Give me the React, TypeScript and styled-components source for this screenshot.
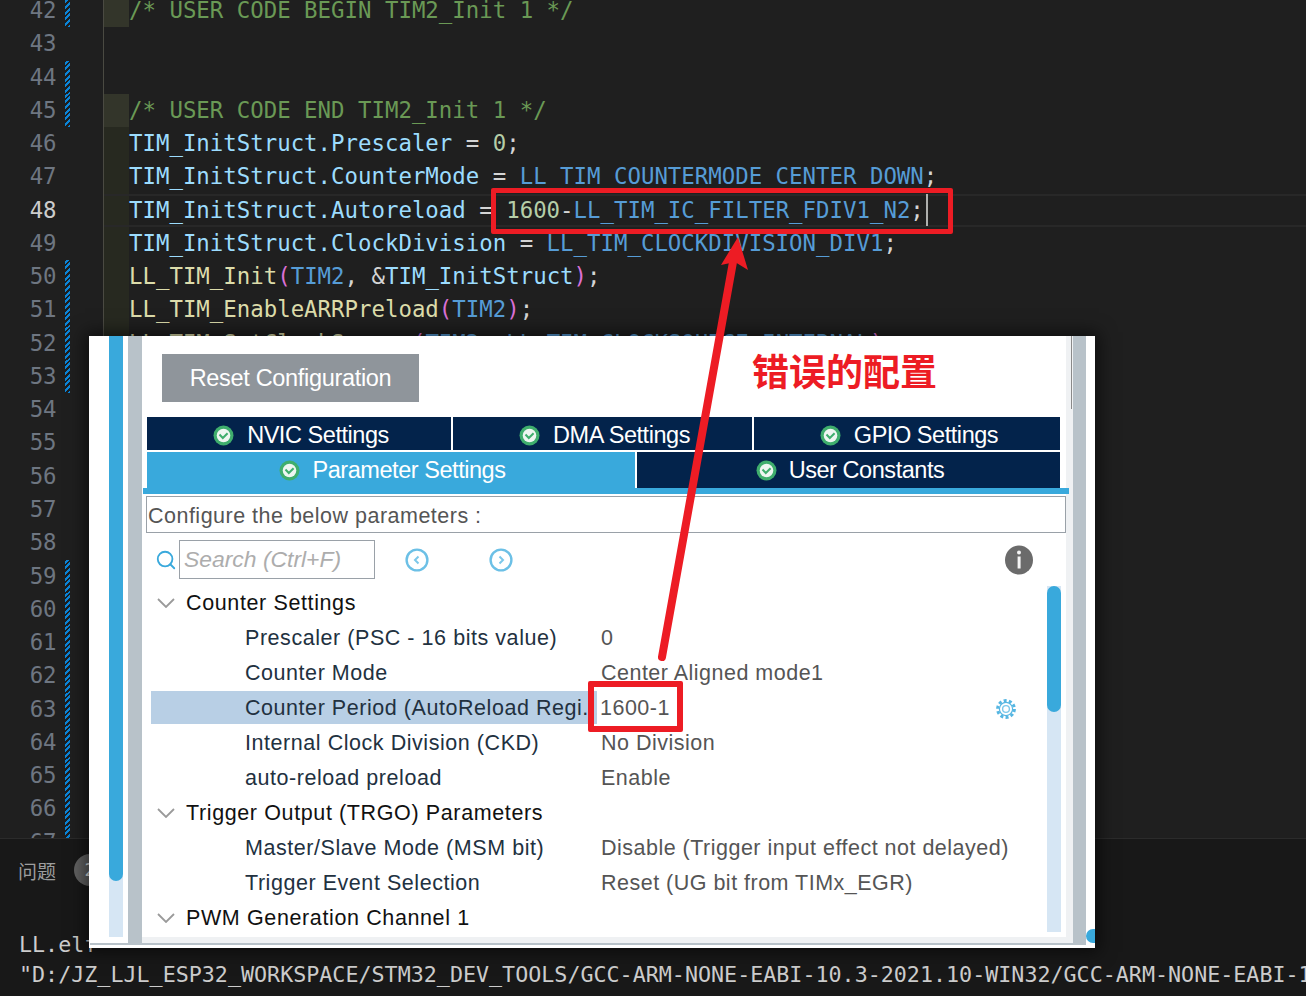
import styled, { createGlobalStyle } from "styled-components";
import { Search } from "lucide-react";

const GlobalStyle = createGlobalStyle`
  html, body {
    margin: 0;
    padding: 0;
    background: #1f1f1f;
  }
  #root {
    width: 1306px;
    height: 996px;
  }
`;

const tokenColors: Record<string, string> = {
  comment: "#6a9955",
  variable: "#9cdcfe",
  macro: "#569cd6",
  func: "#dcdcaa",
  number: "#b5cea8",
  plain: "#d4d4d4",
  paren: "#da70d6",
};

type CodeToken = [string, string];

const codeLines: Record<number, CodeToken[]> = {
  42: [["comment", "/* USER CODE BEGIN TIM2_Init 1 */"]],
  45: [["comment", "/* USER CODE END TIM2_Init 1 */"]],
  46: [["variable", "TIM_InitStruct.Prescaler"], ["plain", " = "], ["number", "0"], ["plain", ";"]],
  47: [["variable", "TIM_InitStruct.CounterMode"], ["plain", " = "], ["macro", "LL_TIM_COUNTERMODE_CENTER_DOWN"], ["plain", ";"]],
  48: [["variable", "TIM_InitStruct.Autoreload"], ["plain", " = "], ["number", "1600"], ["plain", "-"], ["macro", "LL_TIM_IC_FILTER_FDIV1_N2"], ["plain", ";"]],
  49: [["variable", "TIM_InitStruct.ClockDivision"], ["plain", " = "], ["macro", "LL_TIM_CLOCKDIVISION_DIV1"], ["plain", ";"]],
  50: [["func", "LL_TIM_Init"], ["paren", "("], ["macro", "TIM2"], ["plain", ", &"], ["variable", "TIM_InitStruct"], ["paren", ")"], ["plain", ";"]],
  51: [["func", "LL_TIM_EnableARRPreload"], ["paren", "("], ["macro", "TIM2"], ["paren", ")"], ["plain", ";"]],
  52: [["func", "LL_TIM_SetClockSource"], ["paren", "("], ["macro", "TIM2"], ["plain", ", "], ["macro", "LL_TIM_CLOCKSOURCE_INTERNAL"], ["paren", ")"], ["plain", ";"]],
};

const lineNumbers = Array.from({ length: 26 }, (_, i) => 42 + i);
const changedLines = [42, 44, 45, 50, 51, 52, 53, 59, 60, 61, 62, 63, 64, 65, 66, 67];
const bandLines = [42, 45, 46, 47, 48, 49, 50, 51, 52];

const treeRows = [
  { section: "Counter Settings" },
  { label: "Prescaler (PSC - 16 bits value)", value: "0" },
  { label: "Counter Mode", value: "Center Aligned mode1" },
  { label: "Counter Period (AutoReload Regi...", value: "1600-1", active: true },
  { label: "Internal Clock Division (CKD)", value: "No Division" },
  { label: "auto-reload preload", value: "Enable" },
  { section: "Trigger Output (TRGO) Parameters" },
  { label: "Master/Slave Mode (MSM bit)", value: "Disable (Trigger input effect not delayed)" },
  { label: "Trigger Event Selection", value: "Reset (UG bit from TIMx_EGR)" },
  { section: "PWM Generation Channel 1" },
];

function CheckBadge() {
  return (
    <svg width="21" height="21" viewBox="0 0 21 21">
      <circle cx="10.5" cy="10.5" r="10" fill="#3fae6d" />
      <circle cx="10.5" cy="10.5" r="6.8" fill="#eef6f1" />
      <path d="M6.5 9.5 L9.8 13 L14.6 8.2" fill="none" stroke="#3fae6d" strokeWidth="2" />
    </svg>
  );
}

function NavIcon({ right }: { right?: boolean }) {
  return (
    <svg width="24" height="24" viewBox="0 0 24 24">
      <circle cx="12" cy="12" r="10.4" fill="none" stroke="#6cc0e6" strokeWidth="2.4" />
      <path
        d={right ? "M10.5 8.5 L14 12 L10.5 15.5" : "M13.5 8.5 L10 12 L13.5 15.5"}
        fill="none"
        stroke="#7cc8ea"
        strokeWidth="2"
      />
    </svg>
  );
}

function InfoIcon() {
  return (
    <svg width="28" height="30" viewBox="0 0 28 30">
      <ellipse cx="14" cy="15" rx="14" ry="14.5" fill="#6b6b6b" />
      <rect x="12.6" y="11.5" width="3" height="12" fill="#f4f4f4" />
      <circle cx="14" cy="7.6" r="2" fill="#f4f4f4" />
    </svg>
  );
}

function Chevron() {
  return (
    <svg width="18" height="10" viewBox="0 0 18 10">
      <path d="M1 1 L9 9 L17 1" fill="none" stroke="#9a9a9a" strokeWidth="1.8" />
    </svg>
  );
}

function GearIcon() {
  return (
    <svg width="20" height="20" viewBox="0 0 20 20" fill="none">
      <circle cx="10" cy="10" r="8.4" stroke="#55b6e2" strokeWidth="3" strokeDasharray="3 2.28" />
      <circle cx="10" cy="10" r="6.6" stroke="#55b6e2" strokeWidth="1.2" />
      <circle cx="10" cy="10" r="3.4" stroke="#7cc8ea" strokeWidth="1.4" />
    </svg>
  );
}

export default function App() {
  return (
    <Page>
      <GlobalStyle />
      <Editor>
        <Lines>
          {lineNumbers.map((n) => (
            <Line key={n}>
              <LineNo $current={n === 48}>{n}</LineNo>
              <GitMark $on={changedLines.includes(n)} />
              <Guide
                $current={n === 48}
                $band={n === 42 || n === 45 ? "strong" : bandLines.includes(n) ? "soft" : "none"}
              />
              <Code $current={n === 48}>
                {(codeLines[n] || []).map(([kind, text], i) => (
                  <Token key={i} $kind={kind}>
                    {text}
                  </Token>
                ))}
                {n === 48 && <Caret />}
              </Code>
            </Line>
          ))}
        </Lines>
      </Editor>
      <Panel>
        <PanelTabs>
          <PanelTab>问题</PanelTab>
          <CountBadge>2</CountBadge>
        </PanelTabs>
        <Terminal>
          <div>LL.elf</div>
          <div>"D:/JZ_LJL_ESP32_WORKSPACE/STM32_DEV_TOOLS/GCC-ARM-NONE-EABI-10.3-2021.10-WIN32/GCC-ARM-NONE-EABI-10.3-2021.10</div>
        </Terminal>
      </Panel>

      <Dialog>
        <DialogMain>
          <SideTrack>
            <SideThumb />
          </SideTrack>
          <GrayBar />
          <Content>
            <ResetButton>Reset Configuration</ResetButton>
            <TabRow $top>
              <Tab $width={304}><CheckBadge />NVIC Settings</Tab>
              <Tab $width={299}><CheckBadge />DMA Settings</Tab>
              <Tab $width={306}><CheckBadge />GPIO Settings</Tab>
            </TabRow>
            <TabRow>
              <Tab $width={488} $active $tall><CheckBadge />Parameter Settings</Tab>
              <Tab $width={423} $tall><CheckBadge />User Constants</Tab>
            </TabRow>
            <TabLine />
            <ConfigBox>Configure the below parameters :</ConfigBox>
            <SearchRow>
              <Search size={22} color="#39a9dc" strokeWidth={2} />
              <SearchInput>Search (Ctrl+F)</SearchInput>
              <NavButton $gap={30}><NavIcon /></NavButton>
              <NavButton $gap={60}><NavIcon right /></NavButton>
              <InfoSlot><InfoIcon /></InfoSlot>
            </SearchRow>
            <TreeArea>
              <Tree>
                {treeRows.map((row, i) =>
                  row.section ? (
                    <SectionRow key={i}>
                      <Chevron />
                      <SectionName>{row.section}</SectionName>
                    </SectionRow>
                  ) : (
                    <ParamRow key={i}>
                      <ParamName $active={row.active}>{row.label}</ParamName>
                      <ParamValue $active={row.active}>
                        {row.value}
                        {row.active && (
                          <GearSlot>
                            <GearIcon />
                          </GearSlot>
                        )}
                      </ParamValue>
                    </ParamRow>
                  )
                )}
              </Tree>
              <TreeTrack>
                <TreeThumb />
              </TreeTrack>
            </TreeArea>
          </Content>
          <GrayBar $narrow />
          <RightEdge />
        </DialogMain>
        <BottomBar />
        <CornerBlob />
        <TopTick />
      </Dialog>

      <Callout $left={491} $top={188} $width={462} $height={46} $border={5} />
      <Callout $left={588} $top={681} $width={95} $height={51} $border={6} />
      <ArrowLayer width="1306" height="996" viewBox="0 0 1306 996">
        <path d="M662 657 L733 262" stroke="#ed1c24" strokeWidth="8" strokeLinecap="round" fill="none" />
        <path d="M738 237 L721 265 L735 262 L748 270 Z" fill="#ed1c24" />
      </ArrowLayer>
      <CalloutText>错误的配置</CalloutText>
    </Page>
  );
}

const Page = styled.div`
  position: relative;
  width: 1306px;
  height: 996px;
  overflow: hidden;
  display: flex;
  flex-direction: column;
  background: #1f1f1f;
`;

const Editor = styled.div`
  height: 839px;
  overflow: hidden;
  flex: none;
  border-bottom: 1px solid #2b2b2b;
  box-sizing: border-box;
`;

const Lines = styled.div`
  margin-top: -6px;
`;

const Line = styled.div`
  display: flex;
  height: 33.27px;
  font-family: "DejaVu Sans Mono", "Liberation Mono", monospace;
  font-size: 22.38px;
  line-height: 33.27px;
  white-space: pre;
`;

const LineNo = styled.div<{ $current?: boolean }>`
  width: 56px;
  text-align: right;
  color: ${(p) => (p.$current ? "#cccccc" : "#6e7681")};
  flex: none;
  letter-spacing: -0.4px;
`;

const GitMark = styled.div<{ $on?: boolean }>`
  width: 5px;
  margin-left: 9px;
  flex: none;
  background: ${(p) =>
    p.$on
      ? "repeating-linear-gradient(-45deg, #0a84d8 0 2px, transparent 2px 4px)"
      : "transparent"};
`;

const currentLineEdge = "inset 0 2px 0 #282828, inset 0 -2px 0 #282828";

const Guide = styled.div<{ $band: string; $current?: boolean }>`
  width: 25px;
  margin-left: 33px;
  flex: none;
  border-left: 1px solid #4a4a42;
  background: ${(p) =>
    p.$band === "strong" ? "#33352a" : p.$band === "soft" ? "#272920" : "transparent"};
  box-shadow: ${(p) => (p.$current ? currentLineEdge : "none")};
`;

const Code = styled.div<{ $current?: boolean }>`
  flex: 1;
  display: flex;
  align-items: stretch;
  box-shadow: ${(p) => (p.$current ? currentLineEdge : "none")};
`;

const Token = styled.span<{ $kind: string }>`
  color: ${(p) => tokenColors[p.$kind]};
`;

const Caret = styled.span`
  width: 2px;
  height: 32px;
  margin-left: 2px;
  background: #aeafad;
`;

const Panel = styled.div`
  flex: 1;
  background: #181818;
  font-family: "DejaVu Sans Mono", "Liberation Mono", monospace;
`;

const PanelTabs = styled.div`
  display: flex;
  align-items: center;
  gap: 18px;
  height: 62px;
  padding-left: 18px;
`;

const PanelTab = styled.div`
  font-family: "Noto Sans CJK SC", sans-serif;
  font-size: 19px;
  color: #9d9d9d;
`;

const CountBadge = styled.div`
  width: 32px;
  height: 32px;
  border-radius: 50%;
  background: #616161;
  color: #e0e0e0;
  font-size: 18px;
  line-height: 32px;
  text-align: center;
`;

const Terminal = styled.div`
  margin-top: 29px;
  padding-left: 19px;
  font-size: 21.7px;
  line-height: 30px;
  color: #cccccc;
  white-space: nowrap;
`;

const Dialog = styled.div`
  position: absolute;
  left: 89px;
  top: 336px;
  width: 1006px;
  height: 612px;
  background: #ffffff;
  box-shadow: 0 0 16px 4px rgba(0, 0, 0, 0.55);
  font-family: "Liberation Sans", Arial, sans-serif;
`;

const DialogMain = styled.div`
  display: flex;
  height: 607px;
  padding-left: 20px;
  box-sizing: border-box;
`;

const SideTrack = styled.div`
  width: 14px;
  height: 601px;
  flex: none;
  margin-right: 5px;
  background: #d6e6f4;
`;

const SideThumb = styled.div`
  height: 545px;
  background: #39a9dc;
  border-radius: 0 0 7px 7px;
`;

const GrayBar = styled.div<{ $narrow?: boolean }>`
  width: ${(p) => (p.$narrow ? 13 : 14)}px;
  flex: none;
  background: #b8c2c9;
`;

const RightEdge = styled.div`
  width: 9px;
  flex: none;
`;

const Content = styled.div`
  width: 931px;
  flex: none;
  box-sizing: border-box;
  background: #ffffff;
  border-right: 7px solid #eff1f3;
  border-bottom: 6px solid #eff1f3;
  display: flex;
  flex-direction: column;
`;

const ResetButton = styled.div`
  width: 257px;
  height: 48px;
  margin: 18px 0 0 20px;
  background: #8f959b;
  color: #ffffff;
  font-size: 23.5px;
  letter-spacing: -0.32px;
  line-height: 48px;
  text-align: center;
  flex: none;
`;

const TabRow = styled.div<{ $top?: boolean }>`
  display: flex;
  gap: 2px;
  margin: ${(p) => (p.$top ? "15px 0 0 5px" : "2px 0 0 5px")};
  flex: none;
`;

const Tab = styled.div<{ $width: number; $active?: boolean; $tall?: boolean }>`
  width: ${(p) => p.$width}px;
  height: ${(p) => (p.$tall ? 36 : 33)}px;
  box-sizing: border-box;
  padding: ${(p) => (p.$tall ? "1px 0 0 3px" : "3px 0 0 4px")};
  background: ${(p) => (p.$active ? "#39a9dc" : "#03234b")};
  color: #ffffff;
  font-size: 23.5px;
  letter-spacing: -0.45px;
  display: flex;
  align-items: center;
  justify-content: center;
  gap: ${(p) => (p.$tall ? 12 : 13)}px;
`;

const TabLine = styled.div`
  height: 6px;
  margin: 0 -3px 0 1px;
  background: #39a9dc;
  flex: none;
`;

const ConfigBox = styled.div`
  height: 37px;
  margin: 2px 0 0 4px;
  box-sizing: border-box;
  border: 1px solid #9aa1a8;
  padding-left: 1px;
  color: #555555;
  font-size: 21.5px;
  line-height: 38px;
  letter-spacing: 0.49px;
  flex: none;
`;

const SearchRow = styled.div`
  display: flex;
  align-items: center;
  height: 39px;
  margin-top: 7px;
  padding-left: 13px;
  flex: none;
`;

const SearchInput = styled.div`
  width: 196px;
  height: 39px;
  margin-left: 2px;
  box-sizing: border-box;
  border: 1px solid #9aa1a8;
  padding-left: 4px;
  color: #adadad;
  font-style: italic;
  font-size: 22.9px;
  line-height: 37px;
`;

const NavButton = styled.div<{ $gap: number }>`
  display: flex;
  margin-left: ${(p) => p.$gap}px;
`;

const InfoSlot = styled.div`
  display: flex;
  margin-left: auto;
  margin-right: 33px;
`;

const TreeArea = styled.div`
  display: flex;
  flex: 1;
  min-height: 0;
  margin-top: 6px;
`;

const Tree = styled.div`
  flex: 1;
  min-width: 0;
  padding-left: 9px;
  overflow: hidden;
`;

const TreeTrack = styled.div`
  width: 14px;
  height: 346px;
  margin: 1px 5px 0 0;
  flex: none;
  background: #d6e6f4;
`;

const TreeThumb = styled.div`
  height: 126px;
  background: #39a9dc;
  border-radius: 7px;
`;

const SectionRow = styled.div`
  display: flex;
  align-items: center;
  height: 35px;
  padding-left: 6px;
`;

const SectionName = styled.div`
  margin-left: 11px;
  padding-top: 2px;
  color: #111111;
  font-size: 21.5px;
  letter-spacing: 0.62px;
`;

const ParamRow = styled.div`
  display: flex;
  align-items: center;
  height: 35px;
`;

const ParamName = styled.div<{ $active?: boolean }>`
  width: 446px;
  height: 33px;
  flex: none;
  box-sizing: border-box;
  padding-left: 94px;
  background: ${(p) => (p.$active ? "#b8cfe5" : "transparent")};
  color: #22313f;
  font-size: 21.5px;
  line-height: 35px;
  letter-spacing: 0.55px;
  white-space: nowrap;
  overflow: hidden;
`;

const ParamValue = styled.div<{ $active?: boolean }>`
  flex: 1;
  display: flex;
  align-items: center;
  padding-top: 2px;
  padding-left: ${(p) => (p.$active ? 3 : 4)}px;
  color: #555555;
  font-size: 21.5px;
  letter-spacing: 0.49px;
  white-space: nowrap;
`;

const GearSlot = styled.span`
  display: flex;
  margin-left: auto;
  margin-right: 31px;
`;

const BottomBar = styled.div`
  height: 2px;
  margin: 0 9px 0 1px;
  background: #b8c2c9;
`;

const CornerBlob = styled.div`
  position: absolute;
  right: 0;
  top: 593px;
  width: 9px;
  height: 14px;
  background: #39a9dc;
  border-radius: 7px 0 0 7px;
`;

const TopTick = styled.div`
  position: absolute;
  left: 982px;
  top: 0;
  width: 1px;
  height: 73px;
  background: #8a8a8a;
`;

const Callout = styled.div<{ $left: number; $top: number; $width: number; $height: number; $border: number }>`
  position: absolute;
  left: ${(p) => p.$left}px;
  top: ${(p) => p.$top}px;
  width: ${(p) => p.$width}px;
  height: ${(p) => p.$height}px;
  box-sizing: border-box;
  border: ${(p) => p.$border}px solid #ed1c24;
  border-radius: 2px;
`;

const ArrowLayer = styled.svg`
  position: absolute;
  left: 0;
  top: 0;
  pointer-events: none;
`;

const CalloutText = styled.div`
  position: absolute;
  left: 752px;
  top: 343px;
  color: #ed1c24;
  font-family: "Noto Sans CJK SC", sans-serif;
  font-weight: 700;
  font-size: 37px;
  line-height: 54px;
  white-space: nowrap;
`;
